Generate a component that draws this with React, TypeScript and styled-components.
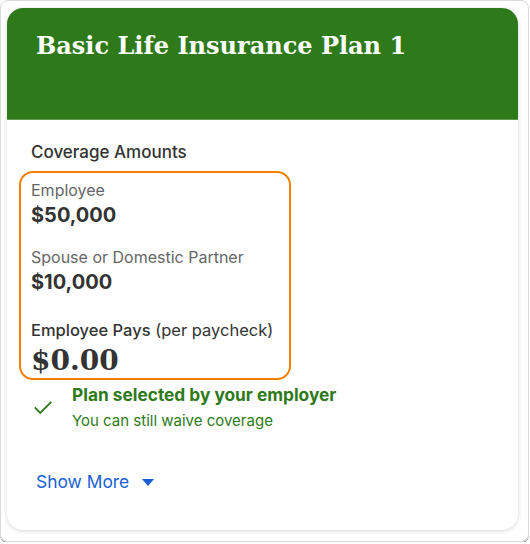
import styled, { createGlobalStyle } from 'styled-components';

const GlobalStyle = createGlobalStyle`
  html, body {
    margin: 0;
    padding: 0;
    background: #ffffff;
  }
  body {
    font-family: Inter, "Noto Sans", sans-serif;
    color: #333333;
  }
`;

const Frame = styled.div`
  box-sizing: border-box;
  width: 529px;
  height: 542px;
  margin: 0;
  border: 1px solid #d9d9d9;
  border-radius: 8px;
  box-shadow: 0 1px 0 #8a8a8a;
  padding: 7px 10px 11px 6px;
  display: flex;
`;

const Card = styled.section`
  flex: 1;
  display: flex;
  flex-direction: column;
  border-radius: 16px;
  overflow: hidden;
  background: #ffffff;
  box-shadow: 0 1px 4px rgba(0, 0, 0, 0.16);
`;

const Header = styled.header`
  height: 112px;
  box-sizing: border-box;
  background: #2e7a1a;
  border-bottom: 1px solid #5d9a4c;
  padding: 20px 29px;
`;

const Title = styled.h2`
  margin: 0;
  font-family: "DejaVu Serif", "Liberation Serif", serif;
  font-weight: 700;
  font-size: 24px;
  line-height: 36px;
  color: #ffffff;
`;

const Body = styled.div`
  padding: 22px 12px 0;
  display: flex;
  flex-direction: column;
`;

const SectionTitle = styled.div`
  margin-left: 12px;
  font-size: 17px;
  line-height: 20px;
  font-weight: 500;
  color: #333;
`;

const Highlight = styled.div`
  margin-top: 9px;
  width: 272px;
  box-sizing: border-box;
  border: 2px solid #f57f00;
  border-radius: 14px;
  padding: 6px 10px 0;
  display: flex;
  flex-direction: column;
`;

const Label = styled.div<{ $gap?: number }>`
  margin-top: ${p => p.$gap ?? 0}px;
  font-size: 16px;
  line-height: 22px;
  color: #666;
`;

const StrongLabel = styled.div`
  margin-top: 23px;
  font-size: 16.5px;
  line-height: 22px;
  color: #333;
  span {
    font-weight: 500;
  }
`;

const Amount = styled.div`
  font-size: 20px;
  line-height: 28px;
  font-weight: 700;
  color: #333;
`;

const Premium = styled.div`
  margin-top: 3px;
  font-family: "DejaVu Serif", "Liberation Serif", serif;
  font-size: 28px;
  line-height: 34px;
  font-weight: 700;
  color: #333;
`;

const Status = styled.div`
  display: flex;
  align-items: center;
  gap: 18px;
  margin: 4px 0 0 13px;
`;

const StatusText = styled.div`
  color: #2e7a1a;
  display: flex;
  flex-direction: column;
  gap: 6px;
`;

const StatusTitle = styled.div`
  font-size: 17.3px;
  line-height: 22px;
  font-weight: 700;
`;

const StatusNote = styled.div`
  font-size: 15px;
  line-height: 18px;
`;

const ShowMore = styled.button`
  margin: 41px 0 0 17px;
  align-self: flex-start;
  background: none;
  border: 0;
  padding: 0;
  display: flex;
  align-items: center;
  gap: 13px;
  font-family: Inter, "Noto Sans", sans-serif;
  font-size: 17.4px;
  line-height: 22px;
  color: #1a5fd6;
  cursor: pointer;
`;

const Check = () => (
  <svg width="22" height="22" viewBox="0 0 24 24" fill="none" stroke="#2e7a1a" strokeWidth="2">
    <path d="M3 12.5l6 6L21 6.5" />
  </svg>
);

const Caret = () => (
  <svg width="12" height="7" viewBox="0 0 12 7" fill="#1a5fd6">
    <path d="M0 0h12L6 7z" />
  </svg>
);

export default function App() {
  return (
    <>
      <GlobalStyle />
      <Frame>
        <Card>
          <Header>
            <Title>Basic Life Insurance Plan 1</Title>
          </Header>
          <Body>
            <SectionTitle>Coverage Amounts</SectionTitle>
            <Highlight>
              <Label>Employee</Label>
              <Amount>$50,000</Amount>
              <Label $gap={17}>Spouse or Domestic Partner</Label>
              <Amount>$10,000</Amount>
              <StrongLabel>
                <span>Employee Pays</span> (per paycheck)
              </StrongLabel>
              <Premium>$0.00</Premium>
            </Highlight>
            <Status>
              <Check />
              <StatusText>
                <StatusTitle>Plan selected by your employer</StatusTitle>
                <StatusNote>You can still waive coverage</StatusNote>
              </StatusText>
            </Status>
            <ShowMore>
              Show More
              <Caret />
            </ShowMore>
          </Body>
        </Card>
      </Frame>
    </>
  );
}
